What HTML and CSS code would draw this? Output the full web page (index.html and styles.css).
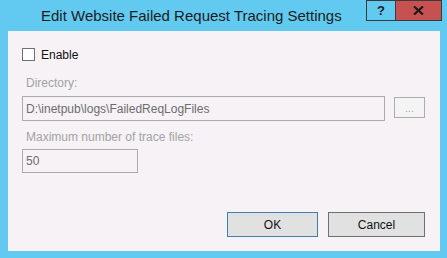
FILE: index.html
```html
<!DOCTYPE html>
<html>
<head>
<meta charset="utf-8">
<link rel="stylesheet" href="styles.css">
</head>
<body>
<div class="window">
  <div class="titlebar">
    <div class="title">Edit Website Failed Request Tracing Settings</div>
    <div class="caption-buttons">
      <div class="cap-btn help">?</div>
      <div class="cap-btn close">
        <svg width="11" height="9" viewBox="0 0 11 9"><path d="M1 0.5 L10 8.5 M10 0.5 L1 8.5" stroke="#1a1a1a" stroke-width="2.2"/></svg>
      </div>
    </div>
  </div>
  <div class="content">
    <label class="check-row">
      <span class="checkbox"></span>
      <span class="check-label">Enable</span>
    </label>
    <div class="field-label first">Directory:</div>
    <div class="dir-row">
      <div class="textbox dir">D:\inetpub\logs\FailedReqLogFiles</div>
      <div class="browse">...</div>
    </div>
    <div class="field-label second">Maximum number of trace files:</div>
    <div class="textbox count">50</div>
    <div class="buttons">
      <div class="btn ok">OK</div>
      <div class="btn cancel">Cancel</div>
    </div>
  </div>
</div>
</body>
</html>
```
FILE: styles.css
```css
html, body {
  margin: 0;
  padding: 0;
}
body {
  width: 447px;
  height: 258px;
  overflow: hidden;
  font-family: "Liberation Sans", Arial, sans-serif;
  font-size: 12px;
}
.window {
  width: 447px;
  height: 258px;
  background: #62caf0;
  display: flex;
  flex-direction: column;
  box-sizing: border-box;
  padding: 0 7px 7px 8px;
}
.titlebar {
  height: 31px;
  display: flex;
  align-items: flex-start;
  flex-shrink: 0;
}
.title {
  flex: 1;
  padding-left: 33px;
  padding-top: 7px;
  font-size: 15px;
  line-height: 18px;
  color: #1c1c1c;
  white-space: nowrap;
}
.caption-buttons {
  display: flex;
  margin-right: -2px;
}
.cap-btn {
  height: 21px;
  box-sizing: border-box;
  border: 1px solid #3a3a3a;
  display: flex;
  align-items: center;
  justify-content: center;
  font-weight: bold;
  color: #1a1a1a;
}
.help {
  width: 29px;
  font-size: 13px;
  border-right: none;
}
.close {
  width: 47px;
  background: #c75050;
}
.content {
  flex: 1;
  background: #f6f2f6;
  display: flex;
  flex-direction: column;
  padding: 17px 15px 14px 14px;
}
.check-row {
  display: flex;
  align-items: center;
  height: 13px;
}
.checkbox {
  width: 13px;
  height: 13px;
  box-sizing: border-box;
  border: 1px solid #707070;
  background: #ffffff;
}
.check-label {
  margin-left: 6px;
  color: #111111;
}
.field-label {
  color: #a3a3a3;
  line-height: 16px;
  padding-left: 4px;
}
.field-label.first {
  margin-top: 14px;
}
.field-label.second {
  margin-top: 8px;
}
.dir-row {
  display: flex;
  align-items: flex-start;
  margin-top: 5px;
}
.textbox {
  box-sizing: border-box;
  border: 1px solid #ababab;
  color: #6d6d6d;
  padding-left: 3px;
  display: flex;
  align-items: center;
}
.textbox.dir {
  width: 363px;
  height: 25px;
}
.textbox.count {
  width: 116px;
  height: 24px;
  margin-top: 4px;
}
.browse {
  width: 31px;
  height: 21px;
  margin-left: 9px;
  margin-top: 1px;
  box-sizing: border-box;
  border: 1px solid #adadad;
  background: #f4f4f4;
  color: #a0a0a0;
  font-size: 10px;
  display: flex;
  align-items: center;
  justify-content: center;
  padding-top: 2px;
}
.buttons {
  margin-top: auto;
  display: flex;
  justify-content: flex-end;
  gap: 10px;
}
.btn {
  height: 25px;
  box-sizing: border-box;
  background: #e1e1e1;
  display: flex;
  align-items: center;
  justify-content: center;
  color: #111111;
}
.ok {
  width: 91px;
  border: 1px solid #3c7fb1;
}
.cancel {
  width: 97px;
  border: 1px solid #707070;
}
```
